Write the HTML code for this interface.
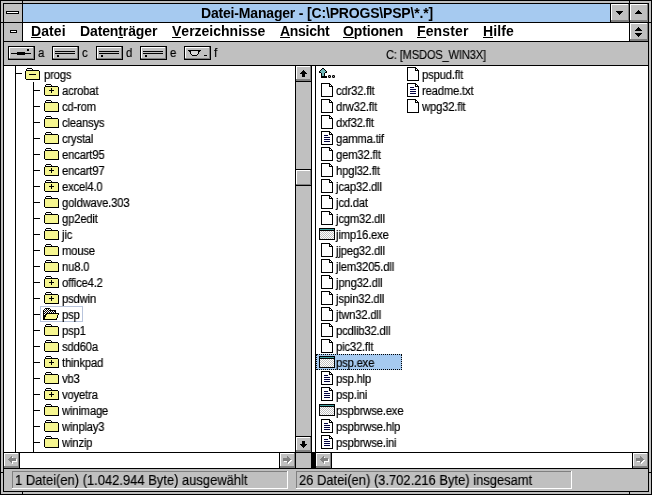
<!DOCTYPE html><html><head><meta charset="utf-8"><style>
*{margin:0;padding:0}
html,body{width:652px;height:495px;overflow:hidden;background:#c0c0c0}
body{position:relative}
div,span,svg{position:absolute}
span{white-space:pre;color:#000;will-change:transform;-webkit-text-stroke:0.25px #000}
.tb{font:bold 14px/14px "Liberation Sans",sans-serif;top:6px;letter-spacing:-0.18px;-webkit-text-stroke:0}
.mb{font:bold 14px/14px "Liberation Sans",sans-serif;top:24px;letter-spacing:-0.3px;-webkit-text-stroke:0}
.mb u{text-decoration:none;position:relative}.mb u::after{content:"";position:absolute;left:0;right:0;top:14px;height:1px;background:#000}
.dl{font:12px/12px "Liberation Sans",sans-serif;top:47px;transform:scaleX(0.94);transform-origin:0 0;-webkit-text-stroke:0.2px #000}
.dv{font:12px/12px "Liberation Sans",sans-serif;top:49px;letter-spacing:-0.2px;transform:scaleX(0.93);transform-origin:0 0;-webkit-text-stroke:0.15px #000}
.st{font:14px/14px "Liberation Sans",sans-serif;top:473px;transform:scaleX(0.925);transform-origin:0 0;-webkit-text-stroke:0.15px #000}
.ft{font:12px/12px "Liberation Sans",sans-serif;letter-spacing:-0.2px;transform:scaleX(0.94);transform-origin:0 0;-webkit-text-stroke:0.2px #000}
</style></head><body><div style="left:0px;top:0px;width:652px;height:495px;background:#000;"></div>
<div style="left:1px;top:1px;width:650px;height:493px;background:#c0c0c0;"></div>
<div style="left:3px;top:3px;width:646px;height:489px;background:#000;"></div>
<div style="left:22px;top:0px;width:1px;height:4px;background:#000;"></div>
<div style="left:22px;top:491px;width:1px;height:4px;background:#000;"></div>
<div style="left:629px;top:0px;width:1px;height:4px;background:#000;"></div>
<div style="left:629px;top:491px;width:1px;height:4px;background:#000;"></div>
<div style="left:0px;top:22px;width:4px;height:1px;background:#000;"></div>
<div style="left:648px;top:22px;width:4px;height:1px;background:#000;"></div>
<div style="left:0px;top:472px;width:4px;height:1px;background:#000;"></div>
<div style="left:648px;top:472px;width:4px;height:1px;background:#000;"></div>
<div style="left:4px;top:4px;width:18px;height:18px;background:#c0c0c0;"></div>
<div style="left:6px;top:11px;width:13px;height:3px;background:#000;"></div>
<div style="left:7px;top:12px;width:11px;height:1px;background:#fff;"></div>
<div style="left:23px;top:4px;width:587px;height:18px;background:#a6caf0;"></div>
<div style="left:611px;top:4px;width:18px;height:18px;background:#808080;"></div>
<div style="left:611px;top:4px;width:17px;height:16px;background:#fff;"></div>
<div style="left:612px;top:5px;width:16px;height:15px;background:#c0c0c0;"></div>
<div style="left:630px;top:4px;width:18px;height:18px;background:#808080;"></div>
<div style="left:630px;top:4px;width:17px;height:16px;background:#fff;"></div>
<div style="left:631px;top:5px;width:16px;height:15px;background:#c0c0c0;"></div>
<div style="left:616px;top:11px;width:7px;height:1px;background:#000;"></div>
<div style="left:617px;top:12px;width:5px;height:1px;background:#000;"></div>
<div style="left:618px;top:13px;width:3px;height:1px;background:#000;"></div>
<div style="left:619px;top:14px;width:1px;height:1px;background:#000;"></div>
<div style="left:638px;top:10px;width:1px;height:1px;background:#000;"></div>
<div style="left:637px;top:11px;width:3px;height:1px;background:#000;"></div>
<div style="left:636px;top:12px;width:5px;height:1px;background:#000;"></div>
<div style="left:635px;top:13px;width:7px;height:1px;background:#000;"></div>
<span class="tb" style="left:201px;">Datei-Manager - [C:\PROGS\PSP\*.*]</span>
<div style="left:4px;top:23px;width:18px;height:18px;background:#c0c0c0;"></div>
<div style="left:10px;top:30px;width:7px;height:3px;background:#000;"></div>
<div style="left:11px;top:31px;width:5px;height:1px;background:#fff;"></div>
<div style="left:23px;top:23px;width:606px;height:18px;background:#fff;"></div>
<div style="left:630px;top:23px;width:18px;height:18px;background:#808080;"></div>
<div style="left:630px;top:23px;width:17px;height:16px;background:#fff;"></div>
<div style="left:631px;top:24px;width:16px;height:15px;background:#c0c0c0;"></div>
<div style="left:638px;top:27px;width:1px;height:1px;background:#000;"></div>
<div style="left:637px;top:28px;width:3px;height:1px;background:#000;"></div>
<div style="left:636px;top:29px;width:5px;height:1px;background:#000;"></div>
<div style="left:635px;top:30px;width:7px;height:1px;background:#000;"></div>
<div style="left:635px;top:33px;width:7px;height:1px;background:#000;"></div>
<div style="left:636px;top:34px;width:5px;height:1px;background:#000;"></div>
<div style="left:637px;top:35px;width:3px;height:1px;background:#000;"></div>
<div style="left:638px;top:36px;width:1px;height:1px;background:#000;"></div>
<span class="mb" style="left:31px;letter-spacing:0.1px"><u>D</u>atei</span>
<span class="mb" style="left:80px;letter-spacing:-0.12px">Daten<u>t</u>räger</span>
<span class="mb" style="left:172px;letter-spacing:0.0px"><u>V</u>erzeichnisse</span>
<span class="mb" style="left:280px;letter-spacing:-0.3px"><u>A</u>nsicht</span>
<span class="mb" style="left:343px;letter-spacing:-0.15px"><u>O</u>ptionen</span>
<span class="mb" style="left:417px;letter-spacing:0.13px"><u>F</u>enster</span>
<span class="mb" style="left:483px;letter-spacing:0.1px"><u>H</u>ilfe</span>
<div style="left:4px;top:42px;width:644px;height:23px;background:#c0c0c0;"></div>
<div style="left:8px;top:46px;width:27px;height:14px;background:#000;"></div>
<div style="left:9px;top:47px;width:25px;height:12px;background:#808080;"></div>
<div style="left:9px;top:47px;width:24px;height:11px;background:#fff;"></div>
<div style="left:10px;top:48px;width:23px;height:10px;background:#c0c0c0;"></div>
<span class="dl" style="left:38px;">a</span>
<div style="left:52px;top:46px;width:27px;height:14px;background:#000;"></div>
<div style="left:53px;top:47px;width:25px;height:12px;background:#808080;"></div>
<div style="left:53px;top:47px;width:24px;height:11px;background:#fff;"></div>
<div style="left:54px;top:48px;width:23px;height:10px;background:#c0c0c0;"></div>
<span class="dl" style="left:82px;">c</span>
<div style="left:96px;top:46px;width:27px;height:14px;background:#000;"></div>
<div style="left:97px;top:47px;width:25px;height:12px;background:#808080;"></div>
<div style="left:97px;top:47px;width:24px;height:11px;background:#fff;"></div>
<div style="left:98px;top:48px;width:23px;height:10px;background:#c0c0c0;"></div>
<span class="dl" style="left:126px;">d</span>
<div style="left:140px;top:46px;width:27px;height:14px;background:#000;"></div>
<div style="left:141px;top:47px;width:25px;height:12px;background:#808080;"></div>
<div style="left:141px;top:47px;width:24px;height:11px;background:#fff;"></div>
<div style="left:142px;top:48px;width:23px;height:10px;background:#c0c0c0;"></div>
<span class="dl" style="left:170px;">e</span>
<div style="left:184px;top:46px;width:27px;height:14px;background:#000;"></div>
<div style="left:185px;top:47px;width:25px;height:12px;background:#808080;"></div>
<div style="left:185px;top:47px;width:24px;height:11px;background:#fff;"></div>
<div style="left:186px;top:48px;width:23px;height:10px;background:#c0c0c0;"></div>
<span class="dl" style="left:214px;">f</span>
<div style="left:11px;top:53px;width:20px;height:1px;background:#000;"></div>
<div style="left:17px;top:52px;width:8px;height:3px;background:#000;"></div>
<div style="left:27px;top:49px;width:2px;height:2px;background:#000;"></div>
<div style="left:55px;top:51px;width:20px;height:1px;background:#000;"></div>
<div style="left:55px;top:53px;width:20px;height:1px;background:#000;"></div>
<div style="left:57px;top:55px;width:2px;height:2px;background:#000;"></div>
<div style="left:99px;top:51px;width:20px;height:1px;background:#000;"></div>
<div style="left:99px;top:53px;width:20px;height:1px;background:#000;"></div>
<div style="left:101px;top:55px;width:2px;height:2px;background:#000;"></div>
<div style="left:143px;top:51px;width:20px;height:1px;background:#000;"></div>
<div style="left:143px;top:53px;width:20px;height:1px;background:#000;"></div>
<div style="left:145px;top:55px;width:2px;height:2px;background:#000;"></div>
<div style="left:188px;top:50px;width:13px;height:1px;background:#000;"></div>
<div style="left:189px;top:51px;width:2px;height:1px;background:#000;"></div>
<div style="left:191px;top:51px;width:7px;height:1px;background:#d8d8d8;"></div>
<div style="left:198px;top:51px;width:2px;height:1px;background:#000;"></div>
<div style="left:190px;top:52px;width:1px;height:2px;background:#000;"></div>
<div style="left:191px;top:52px;width:7px;height:2px;background:#d8d8d8;"></div>
<div style="left:198px;top:52px;width:1px;height:2px;background:#000;"></div>
<div style="left:191px;top:54px;width:1px;height:1px;background:#000;"></div>
<div style="left:192px;top:54px;width:5px;height:1px;background:#d8d8d8;"></div>
<div style="left:197px;top:54px;width:1px;height:1px;background:#000;"></div>
<div style="left:192px;top:55px;width:5px;height:1px;background:#000;"></div>
<div style="left:204px;top:55px;width:3px;height:1px;background:#000;"></div>
<span class="dv" style="left:386px;">C: [MSDOS_WIN3X]</span>
<div style="left:4px;top:65px;width:644px;height:1px;background:#000;"></div>
<div style="left:4px;top:66px;width:291px;height:386px;background:#fff;"></div>
<div style="left:295px;top:66px;width:1px;height:386px;background:#000;"></div>
<div style="left:296px;top:66px;width:15px;height:386px;background:#c0c0c0;"></div>
<div style="left:311px;top:66px;width:1px;height:386px;background:#000;"></div>
<div style="left:312px;top:66px;width:3px;height:386px;background:#fff;"></div>
<div style="left:315px;top:66px;width:1px;height:386px;background:#000;"></div>
<div style="left:316px;top:66px;width:332px;height:386px;background:#fff;"></div>
<div style="left:4px;top:452px;width:644px;height:1px;background:#000;"></div>
<div style="left:4px;top:453px;width:644px;height:15px;background:#fff;"></div>
<div style="left:311px;top:453px;width:5px;height:15px;background:#000;"></div>
<div style="left:296px;top:453px;width:15px;height:15px;background:#c0c0c0;"></div>
<div style="left:295px;top:453px;width:1px;height:15px;background:#000;"></div>
<div style="left:4px;top:468px;width:644px;height:1px;background:#000;"></div>
<div style="left:296px;top:66px;width:15px;height:15px;background:#808080;"></div>
<div style="left:296px;top:66px;width:14px;height:13px;background:#fff;"></div>
<div style="left:297px;top:67px;width:13px;height:12px;background:#c0c0c0;"></div>
<div style="left:296px;top:81px;width:15px;height:1px;background:#000;"></div>
<div style="left:296px;top:436px;width:15px;height:1px;background:#000;"></div>
<div style="left:296px;top:437px;width:15px;height:15px;background:#808080;"></div>
<div style="left:296px;top:437px;width:14px;height:13px;background:#fff;"></div>
<div style="left:297px;top:438px;width:13px;height:12px;background:#c0c0c0;"></div>
<div style="left:303px;top:70px;width:1px;height:1px;background:#000;"></div>
<div style="left:302px;top:71px;width:3px;height:1px;background:#000;"></div>
<div style="left:301px;top:72px;width:5px;height:1px;background:#000;"></div>
<div style="left:300px;top:73px;width:7px;height:1px;background:#000;"></div>
<div style="left:302px;top:74px;width:3px;height:3px;background:#000;"></div>
<div style="left:302px;top:441px;width:3px;height:3px;background:#000;"></div>
<div style="left:300px;top:444px;width:7px;height:1px;background:#000;"></div>
<div style="left:301px;top:445px;width:5px;height:1px;background:#000;"></div>
<div style="left:302px;top:446px;width:3px;height:1px;background:#000;"></div>
<div style="left:303px;top:447px;width:1px;height:1px;background:#000;"></div>
<div style="left:296px;top:169px;width:15px;height:1px;background:#000;"></div>
<div style="left:296px;top:185px;width:15px;height:1px;background:#000;"></div>
<div style="left:296px;top:170px;width:15px;height:15px;background:#808080;"></div>
<div style="left:296px;top:170px;width:14px;height:14px;background:#fff;"></div>
<div style="left:297px;top:171px;width:13px;height:13px;background:#c0c0c0;"></div>
<div style="left:4px;top:453px;width:15px;height:15px;background:#808080;"></div>
<div style="left:4px;top:453px;width:14px;height:13px;background:#fff;"></div>
<div style="left:5px;top:454px;width:13px;height:12px;background:#c0c0c0;"></div>
<div style="left:13px;top:459px;width:4px;height:3px;background:#fff;"></div>
<div style="left:12px;top:457px;width:1px;height:7px;background:#fff;"></div>
<div style="left:11px;top:458px;width:1px;height:5px;background:#fff;"></div>
<div style="left:10px;top:459px;width:1px;height:3px;background:#fff;"></div>
<div style="left:9px;top:460px;width:1px;height:1px;background:#fff;"></div>
<div style="left:12px;top:458px;width:4px;height:3px;background:#808080;"></div>
<div style="left:11px;top:456px;width:1px;height:7px;background:#808080;"></div>
<div style="left:10px;top:457px;width:1px;height:5px;background:#808080;"></div>
<div style="left:9px;top:458px;width:1px;height:3px;background:#808080;"></div>
<div style="left:8px;top:459px;width:1px;height:1px;background:#808080;"></div>
<div style="left:19px;top:453px;width:1px;height:15px;background:#000;"></div>
<div style="left:279px;top:453px;width:1px;height:15px;background:#000;"></div>
<div style="left:280px;top:453px;width:15px;height:15px;background:#808080;"></div>
<div style="left:280px;top:453px;width:14px;height:13px;background:#fff;"></div>
<div style="left:281px;top:454px;width:13px;height:12px;background:#c0c0c0;"></div>
<div style="left:284px;top:459px;width:4px;height:3px;background:#fff;"></div>
<div style="left:288px;top:457px;width:1px;height:7px;background:#fff;"></div>
<div style="left:289px;top:458px;width:1px;height:5px;background:#fff;"></div>
<div style="left:290px;top:459px;width:1px;height:3px;background:#fff;"></div>
<div style="left:291px;top:460px;width:1px;height:1px;background:#fff;"></div>
<div style="left:283px;top:458px;width:4px;height:3px;background:#808080;"></div>
<div style="left:287px;top:456px;width:1px;height:7px;background:#808080;"></div>
<div style="left:288px;top:457px;width:1px;height:5px;background:#808080;"></div>
<div style="left:289px;top:458px;width:1px;height:3px;background:#808080;"></div>
<div style="left:290px;top:459px;width:1px;height:1px;background:#808080;"></div>
<div style="left:316px;top:453px;width:15px;height:15px;background:#808080;"></div>
<div style="left:316px;top:453px;width:14px;height:13px;background:#fff;"></div>
<div style="left:317px;top:454px;width:13px;height:12px;background:#c0c0c0;"></div>
<div style="left:325px;top:459px;width:4px;height:3px;background:#fff;"></div>
<div style="left:324px;top:457px;width:1px;height:7px;background:#fff;"></div>
<div style="left:323px;top:458px;width:1px;height:5px;background:#fff;"></div>
<div style="left:322px;top:459px;width:1px;height:3px;background:#fff;"></div>
<div style="left:321px;top:460px;width:1px;height:1px;background:#fff;"></div>
<div style="left:324px;top:458px;width:4px;height:3px;background:#808080;"></div>
<div style="left:323px;top:456px;width:1px;height:7px;background:#808080;"></div>
<div style="left:322px;top:457px;width:1px;height:5px;background:#808080;"></div>
<div style="left:321px;top:458px;width:1px;height:3px;background:#808080;"></div>
<div style="left:320px;top:459px;width:1px;height:1px;background:#808080;"></div>
<div style="left:331px;top:453px;width:1px;height:15px;background:#000;"></div>
<div style="left:632px;top:453px;width:1px;height:15px;background:#000;"></div>
<div style="left:633px;top:453px;width:15px;height:15px;background:#808080;"></div>
<div style="left:633px;top:453px;width:14px;height:13px;background:#fff;"></div>
<div style="left:634px;top:454px;width:13px;height:12px;background:#c0c0c0;"></div>
<div style="left:637px;top:459px;width:4px;height:3px;background:#fff;"></div>
<div style="left:641px;top:457px;width:1px;height:7px;background:#fff;"></div>
<div style="left:642px;top:458px;width:1px;height:5px;background:#fff;"></div>
<div style="left:643px;top:459px;width:1px;height:3px;background:#fff;"></div>
<div style="left:644px;top:460px;width:1px;height:1px;background:#fff;"></div>
<div style="left:636px;top:458px;width:4px;height:3px;background:#808080;"></div>
<div style="left:640px;top:456px;width:1px;height:7px;background:#808080;"></div>
<div style="left:641px;top:457px;width:1px;height:5px;background:#808080;"></div>
<div style="left:642px;top:458px;width:1px;height:3px;background:#808080;"></div>
<div style="left:643px;top:459px;width:1px;height:1px;background:#808080;"></div>
<div style="left:4px;top:469px;width:644px;height:22px;background:#c0c0c0;"></div>
<div style="left:12px;top:471px;width:276px;height:18px;background:#fff;"></div>
<div style="left:12px;top:471px;width:275px;height:17px;background:#808080;"></div>
<div style="left:13px;top:472px;width:274px;height:16px;background:#c0c0c0;"></div>
<div style="left:296px;top:471px;width:276px;height:18px;background:#fff;"></div>
<div style="left:296px;top:471px;width:275px;height:17px;background:#808080;"></div>
<div style="left:297px;top:472px;width:274px;height:16px;background:#c0c0c0;"></div>
<span class="st" style="left:15px;">1 Datei(en) (1.042.944 Byte) ausgewählt</span>
<span class="st" style="left:299px;">26 Datei(en) (3.702.216 Byte) insgesamt</span>
<div style="left:15px;top:66px;width:1px;height:386px;background:#000;"></div>
<div style="left:16px;top:73px;width:6px;height:1px;background:#000;"></div>
<div style="left:27px;top:68px;width:5px;height:1px;background:#000;"></div>
<div style="left:26px;top:69px;width:1px;height:1px;background:#000;"></div>
<div style="left:32px;top:69px;width:1px;height:1px;background:#000;"></div>
<div style="left:27px;top:69px;width:5px;height:1px;background:#fff;"></div>
<div style="left:26px;top:70px;width:13px;height:1px;background:#000;"></div>
<div style="left:25px;top:71px;width:1px;height:8px;background:#000;"></div>
<div style="left:39px;top:71px;width:1px;height:9px;background:#000;"></div>
<div style="left:26px;top:79px;width:14px;height:1px;background:#000;"></div>
<div style="left:26px;top:71px;width:13px;height:8px;background:#f6f690;"></div>
<div style="left:29px;top:74px;width:7px;height:1px;background:#000;"></div>
<div style="left:33px;top:82px;width:1px;height:370px;background:#000;"></div>
<div style="left:34px;top:90px;width:6px;height:1px;background:#000;"></div>
<div style="left:46px;top:84px;width:5px;height:1px;background:#000;"></div>
<div style="left:45px;top:85px;width:1px;height:1px;background:#000;"></div>
<div style="left:51px;top:85px;width:1px;height:1px;background:#000;"></div>
<div style="left:46px;top:85px;width:5px;height:1px;background:#fff;"></div>
<div style="left:45px;top:86px;width:13px;height:1px;background:#000;"></div>
<div style="left:44px;top:87px;width:1px;height:8px;background:#000;"></div>
<div style="left:58px;top:87px;width:1px;height:9px;background:#000;"></div>
<div style="left:45px;top:95px;width:14px;height:1px;background:#000;"></div>
<div style="left:45px;top:87px;width:13px;height:8px;background:#f6f690;"></div>
<div style="left:49px;top:90px;width:5px;height:1px;background:#000;"></div>
<div style="left:51px;top:88px;width:1px;height:5px;background:#000;"></div>
<div style="left:34px;top:106px;width:6px;height:1px;background:#000;"></div>
<div style="left:46px;top:100px;width:5px;height:1px;background:#000;"></div>
<div style="left:45px;top:101px;width:1px;height:1px;background:#000;"></div>
<div style="left:51px;top:101px;width:1px;height:1px;background:#000;"></div>
<div style="left:46px;top:101px;width:5px;height:1px;background:#fff;"></div>
<div style="left:45px;top:102px;width:13px;height:1px;background:#000;"></div>
<div style="left:44px;top:103px;width:1px;height:8px;background:#000;"></div>
<div style="left:58px;top:103px;width:1px;height:9px;background:#000;"></div>
<div style="left:45px;top:111px;width:14px;height:1px;background:#000;"></div>
<div style="left:45px;top:103px;width:13px;height:8px;background:#f6f690;"></div>
<div style="left:34px;top:122px;width:6px;height:1px;background:#000;"></div>
<div style="left:46px;top:116px;width:5px;height:1px;background:#000;"></div>
<div style="left:45px;top:117px;width:1px;height:1px;background:#000;"></div>
<div style="left:51px;top:117px;width:1px;height:1px;background:#000;"></div>
<div style="left:46px;top:117px;width:5px;height:1px;background:#fff;"></div>
<div style="left:45px;top:118px;width:13px;height:1px;background:#000;"></div>
<div style="left:44px;top:119px;width:1px;height:8px;background:#000;"></div>
<div style="left:58px;top:119px;width:1px;height:9px;background:#000;"></div>
<div style="left:45px;top:127px;width:14px;height:1px;background:#000;"></div>
<div style="left:45px;top:119px;width:13px;height:8px;background:#f6f690;"></div>
<div style="left:34px;top:138px;width:6px;height:1px;background:#000;"></div>
<div style="left:46px;top:132px;width:5px;height:1px;background:#000;"></div>
<div style="left:45px;top:133px;width:1px;height:1px;background:#000;"></div>
<div style="left:51px;top:133px;width:1px;height:1px;background:#000;"></div>
<div style="left:46px;top:133px;width:5px;height:1px;background:#fff;"></div>
<div style="left:45px;top:134px;width:13px;height:1px;background:#000;"></div>
<div style="left:44px;top:135px;width:1px;height:8px;background:#000;"></div>
<div style="left:58px;top:135px;width:1px;height:9px;background:#000;"></div>
<div style="left:45px;top:143px;width:14px;height:1px;background:#000;"></div>
<div style="left:45px;top:135px;width:13px;height:8px;background:#f6f690;"></div>
<div style="left:34px;top:154px;width:6px;height:1px;background:#000;"></div>
<div style="left:46px;top:148px;width:5px;height:1px;background:#000;"></div>
<div style="left:45px;top:149px;width:1px;height:1px;background:#000;"></div>
<div style="left:51px;top:149px;width:1px;height:1px;background:#000;"></div>
<div style="left:46px;top:149px;width:5px;height:1px;background:#fff;"></div>
<div style="left:45px;top:150px;width:13px;height:1px;background:#000;"></div>
<div style="left:44px;top:151px;width:1px;height:8px;background:#000;"></div>
<div style="left:58px;top:151px;width:1px;height:9px;background:#000;"></div>
<div style="left:45px;top:159px;width:14px;height:1px;background:#000;"></div>
<div style="left:45px;top:151px;width:13px;height:8px;background:#f6f690;"></div>
<div style="left:34px;top:170px;width:6px;height:1px;background:#000;"></div>
<div style="left:46px;top:164px;width:5px;height:1px;background:#000;"></div>
<div style="left:45px;top:165px;width:1px;height:1px;background:#000;"></div>
<div style="left:51px;top:165px;width:1px;height:1px;background:#000;"></div>
<div style="left:46px;top:165px;width:5px;height:1px;background:#fff;"></div>
<div style="left:45px;top:166px;width:13px;height:1px;background:#000;"></div>
<div style="left:44px;top:167px;width:1px;height:8px;background:#000;"></div>
<div style="left:58px;top:167px;width:1px;height:9px;background:#000;"></div>
<div style="left:45px;top:175px;width:14px;height:1px;background:#000;"></div>
<div style="left:45px;top:167px;width:13px;height:8px;background:#f6f690;"></div>
<div style="left:49px;top:170px;width:5px;height:1px;background:#000;"></div>
<div style="left:51px;top:168px;width:1px;height:5px;background:#000;"></div>
<div style="left:34px;top:186px;width:6px;height:1px;background:#000;"></div>
<div style="left:46px;top:180px;width:5px;height:1px;background:#000;"></div>
<div style="left:45px;top:181px;width:1px;height:1px;background:#000;"></div>
<div style="left:51px;top:181px;width:1px;height:1px;background:#000;"></div>
<div style="left:46px;top:181px;width:5px;height:1px;background:#fff;"></div>
<div style="left:45px;top:182px;width:13px;height:1px;background:#000;"></div>
<div style="left:44px;top:183px;width:1px;height:8px;background:#000;"></div>
<div style="left:58px;top:183px;width:1px;height:9px;background:#000;"></div>
<div style="left:45px;top:191px;width:14px;height:1px;background:#000;"></div>
<div style="left:45px;top:183px;width:13px;height:8px;background:#f6f690;"></div>
<div style="left:49px;top:186px;width:5px;height:1px;background:#000;"></div>
<div style="left:51px;top:184px;width:1px;height:5px;background:#000;"></div>
<div style="left:34px;top:202px;width:6px;height:1px;background:#000;"></div>
<div style="left:46px;top:196px;width:5px;height:1px;background:#000;"></div>
<div style="left:45px;top:197px;width:1px;height:1px;background:#000;"></div>
<div style="left:51px;top:197px;width:1px;height:1px;background:#000;"></div>
<div style="left:46px;top:197px;width:5px;height:1px;background:#fff;"></div>
<div style="left:45px;top:198px;width:13px;height:1px;background:#000;"></div>
<div style="left:44px;top:199px;width:1px;height:8px;background:#000;"></div>
<div style="left:58px;top:199px;width:1px;height:9px;background:#000;"></div>
<div style="left:45px;top:207px;width:14px;height:1px;background:#000;"></div>
<div style="left:45px;top:199px;width:13px;height:8px;background:#f6f690;"></div>
<div style="left:34px;top:218px;width:6px;height:1px;background:#000;"></div>
<div style="left:46px;top:212px;width:5px;height:1px;background:#000;"></div>
<div style="left:45px;top:213px;width:1px;height:1px;background:#000;"></div>
<div style="left:51px;top:213px;width:1px;height:1px;background:#000;"></div>
<div style="left:46px;top:213px;width:5px;height:1px;background:#fff;"></div>
<div style="left:45px;top:214px;width:13px;height:1px;background:#000;"></div>
<div style="left:44px;top:215px;width:1px;height:8px;background:#000;"></div>
<div style="left:58px;top:215px;width:1px;height:9px;background:#000;"></div>
<div style="left:45px;top:223px;width:14px;height:1px;background:#000;"></div>
<div style="left:45px;top:215px;width:13px;height:8px;background:#f6f690;"></div>
<div style="left:34px;top:234px;width:6px;height:1px;background:#000;"></div>
<div style="left:46px;top:228px;width:5px;height:1px;background:#000;"></div>
<div style="left:45px;top:229px;width:1px;height:1px;background:#000;"></div>
<div style="left:51px;top:229px;width:1px;height:1px;background:#000;"></div>
<div style="left:46px;top:229px;width:5px;height:1px;background:#fff;"></div>
<div style="left:45px;top:230px;width:13px;height:1px;background:#000;"></div>
<div style="left:44px;top:231px;width:1px;height:8px;background:#000;"></div>
<div style="left:58px;top:231px;width:1px;height:9px;background:#000;"></div>
<div style="left:45px;top:239px;width:14px;height:1px;background:#000;"></div>
<div style="left:45px;top:231px;width:13px;height:8px;background:#f6f690;"></div>
<div style="left:34px;top:250px;width:6px;height:1px;background:#000;"></div>
<div style="left:46px;top:244px;width:5px;height:1px;background:#000;"></div>
<div style="left:45px;top:245px;width:1px;height:1px;background:#000;"></div>
<div style="left:51px;top:245px;width:1px;height:1px;background:#000;"></div>
<div style="left:46px;top:245px;width:5px;height:1px;background:#fff;"></div>
<div style="left:45px;top:246px;width:13px;height:1px;background:#000;"></div>
<div style="left:44px;top:247px;width:1px;height:8px;background:#000;"></div>
<div style="left:58px;top:247px;width:1px;height:9px;background:#000;"></div>
<div style="left:45px;top:255px;width:14px;height:1px;background:#000;"></div>
<div style="left:45px;top:247px;width:13px;height:8px;background:#f6f690;"></div>
<div style="left:34px;top:266px;width:6px;height:1px;background:#000;"></div>
<div style="left:46px;top:260px;width:5px;height:1px;background:#000;"></div>
<div style="left:45px;top:261px;width:1px;height:1px;background:#000;"></div>
<div style="left:51px;top:261px;width:1px;height:1px;background:#000;"></div>
<div style="left:46px;top:261px;width:5px;height:1px;background:#fff;"></div>
<div style="left:45px;top:262px;width:13px;height:1px;background:#000;"></div>
<div style="left:44px;top:263px;width:1px;height:8px;background:#000;"></div>
<div style="left:58px;top:263px;width:1px;height:9px;background:#000;"></div>
<div style="left:45px;top:271px;width:14px;height:1px;background:#000;"></div>
<div style="left:45px;top:263px;width:13px;height:8px;background:#f6f690;"></div>
<div style="left:34px;top:282px;width:6px;height:1px;background:#000;"></div>
<div style="left:46px;top:276px;width:5px;height:1px;background:#000;"></div>
<div style="left:45px;top:277px;width:1px;height:1px;background:#000;"></div>
<div style="left:51px;top:277px;width:1px;height:1px;background:#000;"></div>
<div style="left:46px;top:277px;width:5px;height:1px;background:#fff;"></div>
<div style="left:45px;top:278px;width:13px;height:1px;background:#000;"></div>
<div style="left:44px;top:279px;width:1px;height:8px;background:#000;"></div>
<div style="left:58px;top:279px;width:1px;height:9px;background:#000;"></div>
<div style="left:45px;top:287px;width:14px;height:1px;background:#000;"></div>
<div style="left:45px;top:279px;width:13px;height:8px;background:#f6f690;"></div>
<div style="left:49px;top:282px;width:5px;height:1px;background:#000;"></div>
<div style="left:51px;top:280px;width:1px;height:5px;background:#000;"></div>
<div style="left:34px;top:298px;width:6px;height:1px;background:#000;"></div>
<div style="left:46px;top:292px;width:5px;height:1px;background:#000;"></div>
<div style="left:45px;top:293px;width:1px;height:1px;background:#000;"></div>
<div style="left:51px;top:293px;width:1px;height:1px;background:#000;"></div>
<div style="left:46px;top:293px;width:5px;height:1px;background:#fff;"></div>
<div style="left:45px;top:294px;width:13px;height:1px;background:#000;"></div>
<div style="left:44px;top:295px;width:1px;height:8px;background:#000;"></div>
<div style="left:58px;top:295px;width:1px;height:9px;background:#000;"></div>
<div style="left:45px;top:303px;width:14px;height:1px;background:#000;"></div>
<div style="left:45px;top:295px;width:13px;height:8px;background:#f6f690;"></div>
<div style="left:49px;top:298px;width:5px;height:1px;background:#000;"></div>
<div style="left:51px;top:296px;width:1px;height:5px;background:#000;"></div>
<div style="left:34px;top:314px;width:6px;height:1px;background:#000;"></div>
<div style="left:40px;top:306px;width:43px;height:16px;background:#b8c4dc;"></div>
<div style="left:41px;top:307px;width:41px;height:14px;background:#fff;"></div>
<svg style="position:absolute;left:43px;top:308px" width="17" height="13" shape-rendering="crispEdges"><defs><pattern id="ck" width="2" height="2" patternUnits="userSpaceOnUse"><rect width="2" height="2" fill="#fff"/><rect width="1" height="1" fill="#000"/><rect x="1" y="1" width="1" height="1" fill="#000"/></pattern></defs><path d="M0.5 11.5 V2.5 L2.5 0.5 H6.5 L7.5 1.5 V2.5 H12.5 V5.5" fill="url(#ck)" stroke="#000"/><path d="M3.5 5.5 H15.5 L13.5 11.5 H0.5 Z" fill="#f6f690" stroke="#000"/></svg>
<div style="left:34px;top:330px;width:6px;height:1px;background:#000;"></div>
<div style="left:46px;top:324px;width:5px;height:1px;background:#000;"></div>
<div style="left:45px;top:325px;width:1px;height:1px;background:#000;"></div>
<div style="left:51px;top:325px;width:1px;height:1px;background:#000;"></div>
<div style="left:46px;top:325px;width:5px;height:1px;background:#fff;"></div>
<div style="left:45px;top:326px;width:13px;height:1px;background:#000;"></div>
<div style="left:44px;top:327px;width:1px;height:8px;background:#000;"></div>
<div style="left:58px;top:327px;width:1px;height:9px;background:#000;"></div>
<div style="left:45px;top:335px;width:14px;height:1px;background:#000;"></div>
<div style="left:45px;top:327px;width:13px;height:8px;background:#f6f690;"></div>
<div style="left:34px;top:346px;width:6px;height:1px;background:#000;"></div>
<div style="left:46px;top:340px;width:5px;height:1px;background:#000;"></div>
<div style="left:45px;top:341px;width:1px;height:1px;background:#000;"></div>
<div style="left:51px;top:341px;width:1px;height:1px;background:#000;"></div>
<div style="left:46px;top:341px;width:5px;height:1px;background:#fff;"></div>
<div style="left:45px;top:342px;width:13px;height:1px;background:#000;"></div>
<div style="left:44px;top:343px;width:1px;height:8px;background:#000;"></div>
<div style="left:58px;top:343px;width:1px;height:9px;background:#000;"></div>
<div style="left:45px;top:351px;width:14px;height:1px;background:#000;"></div>
<div style="left:45px;top:343px;width:13px;height:8px;background:#f6f690;"></div>
<div style="left:34px;top:362px;width:6px;height:1px;background:#000;"></div>
<div style="left:46px;top:356px;width:5px;height:1px;background:#000;"></div>
<div style="left:45px;top:357px;width:1px;height:1px;background:#000;"></div>
<div style="left:51px;top:357px;width:1px;height:1px;background:#000;"></div>
<div style="left:46px;top:357px;width:5px;height:1px;background:#fff;"></div>
<div style="left:45px;top:358px;width:13px;height:1px;background:#000;"></div>
<div style="left:44px;top:359px;width:1px;height:8px;background:#000;"></div>
<div style="left:58px;top:359px;width:1px;height:9px;background:#000;"></div>
<div style="left:45px;top:367px;width:14px;height:1px;background:#000;"></div>
<div style="left:45px;top:359px;width:13px;height:8px;background:#f6f690;"></div>
<div style="left:49px;top:362px;width:5px;height:1px;background:#000;"></div>
<div style="left:51px;top:360px;width:1px;height:5px;background:#000;"></div>
<div style="left:34px;top:378px;width:6px;height:1px;background:#000;"></div>
<div style="left:46px;top:372px;width:5px;height:1px;background:#000;"></div>
<div style="left:45px;top:373px;width:1px;height:1px;background:#000;"></div>
<div style="left:51px;top:373px;width:1px;height:1px;background:#000;"></div>
<div style="left:46px;top:373px;width:5px;height:1px;background:#fff;"></div>
<div style="left:45px;top:374px;width:13px;height:1px;background:#000;"></div>
<div style="left:44px;top:375px;width:1px;height:8px;background:#000;"></div>
<div style="left:58px;top:375px;width:1px;height:9px;background:#000;"></div>
<div style="left:45px;top:383px;width:14px;height:1px;background:#000;"></div>
<div style="left:45px;top:375px;width:13px;height:8px;background:#f6f690;"></div>
<div style="left:34px;top:394px;width:6px;height:1px;background:#000;"></div>
<div style="left:46px;top:388px;width:5px;height:1px;background:#000;"></div>
<div style="left:45px;top:389px;width:1px;height:1px;background:#000;"></div>
<div style="left:51px;top:389px;width:1px;height:1px;background:#000;"></div>
<div style="left:46px;top:389px;width:5px;height:1px;background:#fff;"></div>
<div style="left:45px;top:390px;width:13px;height:1px;background:#000;"></div>
<div style="left:44px;top:391px;width:1px;height:8px;background:#000;"></div>
<div style="left:58px;top:391px;width:1px;height:9px;background:#000;"></div>
<div style="left:45px;top:399px;width:14px;height:1px;background:#000;"></div>
<div style="left:45px;top:391px;width:13px;height:8px;background:#f6f690;"></div>
<div style="left:49px;top:394px;width:5px;height:1px;background:#000;"></div>
<div style="left:51px;top:392px;width:1px;height:5px;background:#000;"></div>
<div style="left:34px;top:410px;width:6px;height:1px;background:#000;"></div>
<div style="left:46px;top:404px;width:5px;height:1px;background:#000;"></div>
<div style="left:45px;top:405px;width:1px;height:1px;background:#000;"></div>
<div style="left:51px;top:405px;width:1px;height:1px;background:#000;"></div>
<div style="left:46px;top:405px;width:5px;height:1px;background:#fff;"></div>
<div style="left:45px;top:406px;width:13px;height:1px;background:#000;"></div>
<div style="left:44px;top:407px;width:1px;height:8px;background:#000;"></div>
<div style="left:58px;top:407px;width:1px;height:9px;background:#000;"></div>
<div style="left:45px;top:415px;width:14px;height:1px;background:#000;"></div>
<div style="left:45px;top:407px;width:13px;height:8px;background:#f6f690;"></div>
<div style="left:34px;top:426px;width:6px;height:1px;background:#000;"></div>
<div style="left:46px;top:420px;width:5px;height:1px;background:#000;"></div>
<div style="left:45px;top:421px;width:1px;height:1px;background:#000;"></div>
<div style="left:51px;top:421px;width:1px;height:1px;background:#000;"></div>
<div style="left:46px;top:421px;width:5px;height:1px;background:#fff;"></div>
<div style="left:45px;top:422px;width:13px;height:1px;background:#000;"></div>
<div style="left:44px;top:423px;width:1px;height:8px;background:#000;"></div>
<div style="left:58px;top:423px;width:1px;height:9px;background:#000;"></div>
<div style="left:45px;top:431px;width:14px;height:1px;background:#000;"></div>
<div style="left:45px;top:423px;width:13px;height:8px;background:#f6f690;"></div>
<div style="left:34px;top:442px;width:6px;height:1px;background:#000;"></div>
<div style="left:46px;top:436px;width:5px;height:1px;background:#000;"></div>
<div style="left:45px;top:437px;width:1px;height:1px;background:#000;"></div>
<div style="left:51px;top:437px;width:1px;height:1px;background:#000;"></div>
<div style="left:46px;top:437px;width:5px;height:1px;background:#fff;"></div>
<div style="left:45px;top:438px;width:13px;height:1px;background:#000;"></div>
<div style="left:44px;top:439px;width:1px;height:8px;background:#000;"></div>
<div style="left:58px;top:439px;width:1px;height:9px;background:#000;"></div>
<div style="left:45px;top:447px;width:14px;height:1px;background:#000;"></div>
<div style="left:45px;top:439px;width:13px;height:8px;background:#f6f690;"></div>
<div style="left:322px;top:68px;width:2px;height:1px;background:#000;"></div>
<div style="left:321px;top:69px;width:1px;height:1px;background:#000;"></div>
<div style="left:322px;top:69px;width:2px;height:1px;background:#70b8b8;"></div>
<div style="left:324px;top:69px;width:1px;height:1px;background:#000;"></div>
<div style="left:320px;top:70px;width:1px;height:1px;background:#000;"></div>
<div style="left:321px;top:70px;width:4px;height:1px;background:#70b8b8;"></div>
<div style="left:325px;top:70px;width:1px;height:1px;background:#000;"></div>
<div style="left:319px;top:71px;width:1px;height:1px;background:#000;"></div>
<div style="left:320px;top:71px;width:6px;height:1px;background:#70b8b8;"></div>
<div style="left:326px;top:71px;width:1px;height:1px;background:#000;"></div>
<div style="left:319px;top:72px;width:2px;height:1px;background:#000;"></div>
<div style="left:321px;top:72px;width:4px;height:1px;background:#70b8b8;"></div>
<div style="left:325px;top:72px;width:2px;height:1px;background:#000;"></div>
<div style="left:321px;top:73px;width:1px;height:1px;background:#000;"></div>
<div style="left:322px;top:73px;width:2px;height:1px;background:#70b8b8;"></div>
<div style="left:324px;top:73px;width:1px;height:1px;background:#000;"></div>
<div style="left:321px;top:74px;width:1px;height:1px;background:#000;"></div>
<div style="left:322px;top:74px;width:2px;height:1px;background:#70b8b8;"></div>
<div style="left:324px;top:74px;width:1px;height:1px;background:#000;"></div>
<div style="left:321px;top:75px;width:1px;height:1px;background:#000;"></div>
<div style="left:322px;top:75px;width:2px;height:1px;background:#70b8b8;"></div>
<div style="left:324px;top:75px;width:1px;height:1px;background:#000;"></div>
<div style="left:321px;top:76px;width:6px;height:1px;background:#000;"></div>
<div style="left:321px;top:77px;width:6px;height:1px;background:#000;"></div>
<div style="left:328px;top:75px;width:3px;height:3px;background:#000;"></div>
<div style="left:329px;top:76px;width:1px;height:1px;background:#a0a0a0;"></div>
<div style="left:328px;top:75px;width:1px;height:1px;background:#606060;"></div>
<div style="left:328px;top:77px;width:1px;height:1px;background:#606060;"></div>
<div style="left:330px;top:75px;width:1px;height:1px;background:#606060;"></div>
<div style="left:330px;top:77px;width:1px;height:1px;background:#606060;"></div>
<div style="left:332px;top:75px;width:3px;height:3px;background:#000;"></div>
<div style="left:333px;top:76px;width:1px;height:1px;background:#a0a0a0;"></div>
<div style="left:332px;top:75px;width:1px;height:1px;background:#606060;"></div>
<div style="left:332px;top:77px;width:1px;height:1px;background:#606060;"></div>
<div style="left:334px;top:75px;width:1px;height:1px;background:#606060;"></div>
<div style="left:334px;top:77px;width:1px;height:1px;background:#606060;"></div>
<div style="left:321px;top:83px;width:9px;height:1px;background:#000;"></div>
<div style="left:321px;top:83px;width:1px;height:14px;background:#000;"></div>
<div style="left:321px;top:96px;width:12px;height:1px;background:#000;"></div>
<div style="left:332px;top:86px;width:1px;height:11px;background:#000;"></div>
<div style="left:329px;top:83px;width:1px;height:4px;background:#000;"></div>
<div style="left:329px;top:86px;width:4px;height:1px;background:#000;"></div>
<div style="left:330px;top:84px;width:1px;height:1px;background:#000;"></div>
<div style="left:331px;top:85px;width:1px;height:1px;background:#000;"></div>
<span class="ft" style="left:336px;top:85px;">cdr32.flt</span>
<div style="left:321px;top:99px;width:9px;height:1px;background:#000;"></div>
<div style="left:321px;top:99px;width:1px;height:14px;background:#000;"></div>
<div style="left:321px;top:112px;width:12px;height:1px;background:#000;"></div>
<div style="left:332px;top:102px;width:1px;height:11px;background:#000;"></div>
<div style="left:329px;top:99px;width:1px;height:4px;background:#000;"></div>
<div style="left:329px;top:102px;width:4px;height:1px;background:#000;"></div>
<div style="left:330px;top:100px;width:1px;height:1px;background:#000;"></div>
<div style="left:331px;top:101px;width:1px;height:1px;background:#000;"></div>
<span class="ft" style="left:336px;top:101px;">drw32.flt</span>
<div style="left:321px;top:115px;width:9px;height:1px;background:#000;"></div>
<div style="left:321px;top:115px;width:1px;height:14px;background:#000;"></div>
<div style="left:321px;top:128px;width:12px;height:1px;background:#000;"></div>
<div style="left:332px;top:118px;width:1px;height:11px;background:#000;"></div>
<div style="left:329px;top:115px;width:1px;height:4px;background:#000;"></div>
<div style="left:329px;top:118px;width:4px;height:1px;background:#000;"></div>
<div style="left:330px;top:116px;width:1px;height:1px;background:#000;"></div>
<div style="left:331px;top:117px;width:1px;height:1px;background:#000;"></div>
<span class="ft" style="left:336px;top:117px;">dxf32.flt</span>
<div style="left:321px;top:131px;width:9px;height:1px;background:#000;"></div>
<div style="left:321px;top:131px;width:1px;height:14px;background:#000;"></div>
<div style="left:321px;top:144px;width:12px;height:1px;background:#000;"></div>
<div style="left:332px;top:134px;width:1px;height:11px;background:#000;"></div>
<div style="left:329px;top:131px;width:1px;height:4px;background:#000;"></div>
<div style="left:329px;top:134px;width:4px;height:1px;background:#000;"></div>
<div style="left:330px;top:132px;width:1px;height:1px;background:#000;"></div>
<div style="left:331px;top:133px;width:1px;height:1px;background:#000;"></div>
<div style="left:324px;top:135px;width:4px;height:1px;background:#000040;"></div>
<div style="left:324px;top:137px;width:6px;height:1px;background:#000040;"></div>
<div style="left:324px;top:139px;width:6px;height:1px;background:#000040;"></div>
<div style="left:324px;top:141px;width:6px;height:1px;background:#000040;"></div>
<span class="ft" style="left:336px;top:133px;">gamma.tif</span>
<div style="left:321px;top:147px;width:9px;height:1px;background:#000;"></div>
<div style="left:321px;top:147px;width:1px;height:14px;background:#000;"></div>
<div style="left:321px;top:160px;width:12px;height:1px;background:#000;"></div>
<div style="left:332px;top:150px;width:1px;height:11px;background:#000;"></div>
<div style="left:329px;top:147px;width:1px;height:4px;background:#000;"></div>
<div style="left:329px;top:150px;width:4px;height:1px;background:#000;"></div>
<div style="left:330px;top:148px;width:1px;height:1px;background:#000;"></div>
<div style="left:331px;top:149px;width:1px;height:1px;background:#000;"></div>
<span class="ft" style="left:336px;top:149px;">gem32.flt</span>
<div style="left:321px;top:163px;width:9px;height:1px;background:#000;"></div>
<div style="left:321px;top:163px;width:1px;height:14px;background:#000;"></div>
<div style="left:321px;top:176px;width:12px;height:1px;background:#000;"></div>
<div style="left:332px;top:166px;width:1px;height:11px;background:#000;"></div>
<div style="left:329px;top:163px;width:1px;height:4px;background:#000;"></div>
<div style="left:329px;top:166px;width:4px;height:1px;background:#000;"></div>
<div style="left:330px;top:164px;width:1px;height:1px;background:#000;"></div>
<div style="left:331px;top:165px;width:1px;height:1px;background:#000;"></div>
<span class="ft" style="left:336px;top:165px;">hpgl32.flt</span>
<div style="left:321px;top:179px;width:9px;height:1px;background:#000;"></div>
<div style="left:321px;top:179px;width:1px;height:14px;background:#000;"></div>
<div style="left:321px;top:192px;width:12px;height:1px;background:#000;"></div>
<div style="left:332px;top:182px;width:1px;height:11px;background:#000;"></div>
<div style="left:329px;top:179px;width:1px;height:4px;background:#000;"></div>
<div style="left:329px;top:182px;width:4px;height:1px;background:#000;"></div>
<div style="left:330px;top:180px;width:1px;height:1px;background:#000;"></div>
<div style="left:331px;top:181px;width:1px;height:1px;background:#000;"></div>
<span class="ft" style="left:336px;top:181px;">jcap32.dll</span>
<div style="left:321px;top:195px;width:9px;height:1px;background:#000;"></div>
<div style="left:321px;top:195px;width:1px;height:14px;background:#000;"></div>
<div style="left:321px;top:208px;width:12px;height:1px;background:#000;"></div>
<div style="left:332px;top:198px;width:1px;height:11px;background:#000;"></div>
<div style="left:329px;top:195px;width:1px;height:4px;background:#000;"></div>
<div style="left:329px;top:198px;width:4px;height:1px;background:#000;"></div>
<div style="left:330px;top:196px;width:1px;height:1px;background:#000;"></div>
<div style="left:331px;top:197px;width:1px;height:1px;background:#000;"></div>
<span class="ft" style="left:336px;top:197px;">jcd.dat</span>
<div style="left:321px;top:211px;width:9px;height:1px;background:#000;"></div>
<div style="left:321px;top:211px;width:1px;height:14px;background:#000;"></div>
<div style="left:321px;top:224px;width:12px;height:1px;background:#000;"></div>
<div style="left:332px;top:214px;width:1px;height:11px;background:#000;"></div>
<div style="left:329px;top:211px;width:1px;height:4px;background:#000;"></div>
<div style="left:329px;top:214px;width:4px;height:1px;background:#000;"></div>
<div style="left:330px;top:212px;width:1px;height:1px;background:#000;"></div>
<div style="left:331px;top:213px;width:1px;height:1px;background:#000;"></div>
<span class="ft" style="left:336px;top:213px;">jcgm32.dll</span>
<div style="left:319px;top:228px;width:16px;height:12px;background:#000;"></div>
<div style="left:320px;top:229px;width:14px;height:1px;background:#40a0a0;"></div>
<div style="left:320px;top:231px;width:14px;height:8px;background:#fff;background-image:linear-gradient(45deg,#c0c0c0 25%,transparent 25%,transparent 75%,#c0c0c0 75%),linear-gradient(45deg,#c0c0c0 25%,transparent 25%,transparent 75%,#c0c0c0 75%);background-size:2px 2px;background-position:0 0,1px 1px"></div>
<span class="ft" style="left:336px;top:229px;">jimp16.exe</span>
<div style="left:321px;top:243px;width:9px;height:1px;background:#000;"></div>
<div style="left:321px;top:243px;width:1px;height:14px;background:#000;"></div>
<div style="left:321px;top:256px;width:12px;height:1px;background:#000;"></div>
<div style="left:332px;top:246px;width:1px;height:11px;background:#000;"></div>
<div style="left:329px;top:243px;width:1px;height:4px;background:#000;"></div>
<div style="left:329px;top:246px;width:4px;height:1px;background:#000;"></div>
<div style="left:330px;top:244px;width:1px;height:1px;background:#000;"></div>
<div style="left:331px;top:245px;width:1px;height:1px;background:#000;"></div>
<span class="ft" style="left:336px;top:245px;">jjpeg32.dll</span>
<div style="left:321px;top:259px;width:9px;height:1px;background:#000;"></div>
<div style="left:321px;top:259px;width:1px;height:14px;background:#000;"></div>
<div style="left:321px;top:272px;width:12px;height:1px;background:#000;"></div>
<div style="left:332px;top:262px;width:1px;height:11px;background:#000;"></div>
<div style="left:329px;top:259px;width:1px;height:4px;background:#000;"></div>
<div style="left:329px;top:262px;width:4px;height:1px;background:#000;"></div>
<div style="left:330px;top:260px;width:1px;height:1px;background:#000;"></div>
<div style="left:331px;top:261px;width:1px;height:1px;background:#000;"></div>
<span class="ft" style="left:336px;top:261px;">jlem3205.dll</span>
<div style="left:321px;top:275px;width:9px;height:1px;background:#000;"></div>
<div style="left:321px;top:275px;width:1px;height:14px;background:#000;"></div>
<div style="left:321px;top:288px;width:12px;height:1px;background:#000;"></div>
<div style="left:332px;top:278px;width:1px;height:11px;background:#000;"></div>
<div style="left:329px;top:275px;width:1px;height:4px;background:#000;"></div>
<div style="left:329px;top:278px;width:4px;height:1px;background:#000;"></div>
<div style="left:330px;top:276px;width:1px;height:1px;background:#000;"></div>
<div style="left:331px;top:277px;width:1px;height:1px;background:#000;"></div>
<span class="ft" style="left:336px;top:277px;">jpng32.dll</span>
<div style="left:321px;top:291px;width:9px;height:1px;background:#000;"></div>
<div style="left:321px;top:291px;width:1px;height:14px;background:#000;"></div>
<div style="left:321px;top:304px;width:12px;height:1px;background:#000;"></div>
<div style="left:332px;top:294px;width:1px;height:11px;background:#000;"></div>
<div style="left:329px;top:291px;width:1px;height:4px;background:#000;"></div>
<div style="left:329px;top:294px;width:4px;height:1px;background:#000;"></div>
<div style="left:330px;top:292px;width:1px;height:1px;background:#000;"></div>
<div style="left:331px;top:293px;width:1px;height:1px;background:#000;"></div>
<span class="ft" style="left:336px;top:293px;">jspin32.dll</span>
<div style="left:321px;top:307px;width:9px;height:1px;background:#000;"></div>
<div style="left:321px;top:307px;width:1px;height:14px;background:#000;"></div>
<div style="left:321px;top:320px;width:12px;height:1px;background:#000;"></div>
<div style="left:332px;top:310px;width:1px;height:11px;background:#000;"></div>
<div style="left:329px;top:307px;width:1px;height:4px;background:#000;"></div>
<div style="left:329px;top:310px;width:4px;height:1px;background:#000;"></div>
<div style="left:330px;top:308px;width:1px;height:1px;background:#000;"></div>
<div style="left:331px;top:309px;width:1px;height:1px;background:#000;"></div>
<span class="ft" style="left:336px;top:309px;">jtwn32.dll</span>
<div style="left:321px;top:323px;width:9px;height:1px;background:#000;"></div>
<div style="left:321px;top:323px;width:1px;height:14px;background:#000;"></div>
<div style="left:321px;top:336px;width:12px;height:1px;background:#000;"></div>
<div style="left:332px;top:326px;width:1px;height:11px;background:#000;"></div>
<div style="left:329px;top:323px;width:1px;height:4px;background:#000;"></div>
<div style="left:329px;top:326px;width:4px;height:1px;background:#000;"></div>
<div style="left:330px;top:324px;width:1px;height:1px;background:#000;"></div>
<div style="left:331px;top:325px;width:1px;height:1px;background:#000;"></div>
<span class="ft" style="left:336px;top:325px;">pcdlib32.dll</span>
<div style="left:321px;top:339px;width:9px;height:1px;background:#000;"></div>
<div style="left:321px;top:339px;width:1px;height:14px;background:#000;"></div>
<div style="left:321px;top:352px;width:12px;height:1px;background:#000;"></div>
<div style="left:332px;top:342px;width:1px;height:11px;background:#000;"></div>
<div style="left:329px;top:339px;width:1px;height:4px;background:#000;"></div>
<div style="left:329px;top:342px;width:4px;height:1px;background:#000;"></div>
<div style="left:330px;top:340px;width:1px;height:1px;background:#000;"></div>
<div style="left:331px;top:341px;width:1px;height:1px;background:#000;"></div>
<span class="ft" style="left:336px;top:341px;">pic32.flt</span>
<div style="left:316px;top:354px;width:86px;height:16px;background:#a6caf0;"></div>
<div style="left:316px;top:354px;width:84px;height:14px;border:1px dotted #000"></div>
<div style="left:319px;top:356px;width:16px;height:12px;background:#000;"></div>
<div style="left:320px;top:357px;width:14px;height:1px;background:#40a0a0;"></div>
<div style="left:320px;top:359px;width:14px;height:8px;background:#fff;background-image:linear-gradient(45deg,#c0c0c0 25%,transparent 25%,transparent 75%,#c0c0c0 75%),linear-gradient(45deg,#c0c0c0 25%,transparent 25%,transparent 75%,#c0c0c0 75%);background-size:2px 2px;background-position:0 0,1px 1px"></div>
<span class="ft" style="left:336px;top:357px;">psp.exe</span>
<div style="left:321px;top:371px;width:9px;height:1px;background:#000;"></div>
<div style="left:321px;top:371px;width:1px;height:14px;background:#000;"></div>
<div style="left:321px;top:384px;width:12px;height:1px;background:#000;"></div>
<div style="left:332px;top:374px;width:1px;height:11px;background:#000;"></div>
<div style="left:329px;top:371px;width:1px;height:4px;background:#000;"></div>
<div style="left:329px;top:374px;width:4px;height:1px;background:#000;"></div>
<div style="left:330px;top:372px;width:1px;height:1px;background:#000;"></div>
<div style="left:331px;top:373px;width:1px;height:1px;background:#000;"></div>
<div style="left:324px;top:375px;width:4px;height:1px;background:#000040;"></div>
<div style="left:324px;top:377px;width:6px;height:1px;background:#000040;"></div>
<div style="left:324px;top:379px;width:6px;height:1px;background:#000040;"></div>
<div style="left:324px;top:381px;width:6px;height:1px;background:#000040;"></div>
<span class="ft" style="left:336px;top:373px;">psp.hlp</span>
<div style="left:321px;top:387px;width:9px;height:1px;background:#000;"></div>
<div style="left:321px;top:387px;width:1px;height:14px;background:#000;"></div>
<div style="left:321px;top:400px;width:12px;height:1px;background:#000;"></div>
<div style="left:332px;top:390px;width:1px;height:11px;background:#000;"></div>
<div style="left:329px;top:387px;width:1px;height:4px;background:#000;"></div>
<div style="left:329px;top:390px;width:4px;height:1px;background:#000;"></div>
<div style="left:330px;top:388px;width:1px;height:1px;background:#000;"></div>
<div style="left:331px;top:389px;width:1px;height:1px;background:#000;"></div>
<div style="left:324px;top:391px;width:4px;height:1px;background:#000040;"></div>
<div style="left:324px;top:393px;width:6px;height:1px;background:#000040;"></div>
<div style="left:324px;top:395px;width:6px;height:1px;background:#000040;"></div>
<div style="left:324px;top:397px;width:6px;height:1px;background:#000040;"></div>
<span class="ft" style="left:336px;top:389px;">psp.ini</span>
<div style="left:319px;top:404px;width:16px;height:12px;background:#000;"></div>
<div style="left:320px;top:405px;width:14px;height:1px;background:#40a0a0;"></div>
<div style="left:320px;top:407px;width:14px;height:8px;background:#fff;background-image:linear-gradient(45deg,#c0c0c0 25%,transparent 25%,transparent 75%,#c0c0c0 75%),linear-gradient(45deg,#c0c0c0 25%,transparent 25%,transparent 75%,#c0c0c0 75%);background-size:2px 2px;background-position:0 0,1px 1px"></div>
<span class="ft" style="left:336px;top:405px;">pspbrwse.exe</span>
<div style="left:321px;top:419px;width:9px;height:1px;background:#000;"></div>
<div style="left:321px;top:419px;width:1px;height:14px;background:#000;"></div>
<div style="left:321px;top:432px;width:12px;height:1px;background:#000;"></div>
<div style="left:332px;top:422px;width:1px;height:11px;background:#000;"></div>
<div style="left:329px;top:419px;width:1px;height:4px;background:#000;"></div>
<div style="left:329px;top:422px;width:4px;height:1px;background:#000;"></div>
<div style="left:330px;top:420px;width:1px;height:1px;background:#000;"></div>
<div style="left:331px;top:421px;width:1px;height:1px;background:#000;"></div>
<div style="left:324px;top:423px;width:4px;height:1px;background:#000040;"></div>
<div style="left:324px;top:425px;width:6px;height:1px;background:#000040;"></div>
<div style="left:324px;top:427px;width:6px;height:1px;background:#000040;"></div>
<div style="left:324px;top:429px;width:6px;height:1px;background:#000040;"></div>
<span class="ft" style="left:336px;top:421px;">pspbrwse.hlp</span>
<div style="left:321px;top:435px;width:9px;height:1px;background:#000;"></div>
<div style="left:321px;top:435px;width:1px;height:14px;background:#000;"></div>
<div style="left:321px;top:448px;width:12px;height:1px;background:#000;"></div>
<div style="left:332px;top:438px;width:1px;height:11px;background:#000;"></div>
<div style="left:329px;top:435px;width:1px;height:4px;background:#000;"></div>
<div style="left:329px;top:438px;width:4px;height:1px;background:#000;"></div>
<div style="left:330px;top:436px;width:1px;height:1px;background:#000;"></div>
<div style="left:331px;top:437px;width:1px;height:1px;background:#000;"></div>
<div style="left:324px;top:439px;width:4px;height:1px;background:#000040;"></div>
<div style="left:324px;top:441px;width:6px;height:1px;background:#000040;"></div>
<div style="left:324px;top:443px;width:6px;height:1px;background:#000040;"></div>
<div style="left:324px;top:445px;width:6px;height:1px;background:#000040;"></div>
<span class="ft" style="left:336px;top:437px;">pspbrwse.ini</span>
<div style="left:407px;top:67px;width:9px;height:1px;background:#000;"></div>
<div style="left:407px;top:67px;width:1px;height:14px;background:#000;"></div>
<div style="left:407px;top:80px;width:12px;height:1px;background:#000;"></div>
<div style="left:418px;top:70px;width:1px;height:11px;background:#000;"></div>
<div style="left:415px;top:67px;width:1px;height:4px;background:#000;"></div>
<div style="left:415px;top:70px;width:4px;height:1px;background:#000;"></div>
<div style="left:416px;top:68px;width:1px;height:1px;background:#000;"></div>
<div style="left:417px;top:69px;width:1px;height:1px;background:#000;"></div>
<span class="ft" style="left:422px;top:69px;">pspud.flt</span>
<div style="left:407px;top:83px;width:9px;height:1px;background:#000;"></div>
<div style="left:407px;top:83px;width:1px;height:14px;background:#000;"></div>
<div style="left:407px;top:96px;width:12px;height:1px;background:#000;"></div>
<div style="left:418px;top:86px;width:1px;height:11px;background:#000;"></div>
<div style="left:415px;top:83px;width:1px;height:4px;background:#000;"></div>
<div style="left:415px;top:86px;width:4px;height:1px;background:#000;"></div>
<div style="left:416px;top:84px;width:1px;height:1px;background:#000;"></div>
<div style="left:417px;top:85px;width:1px;height:1px;background:#000;"></div>
<div style="left:410px;top:87px;width:4px;height:1px;background:#000040;"></div>
<div style="left:410px;top:89px;width:6px;height:1px;background:#000040;"></div>
<div style="left:410px;top:91px;width:6px;height:1px;background:#000040;"></div>
<div style="left:410px;top:93px;width:6px;height:1px;background:#000040;"></div>
<span class="ft" style="left:422px;top:85px;">readme.txt</span>
<div style="left:407px;top:99px;width:9px;height:1px;background:#000;"></div>
<div style="left:407px;top:99px;width:1px;height:14px;background:#000;"></div>
<div style="left:407px;top:112px;width:12px;height:1px;background:#000;"></div>
<div style="left:418px;top:102px;width:1px;height:11px;background:#000;"></div>
<div style="left:415px;top:99px;width:1px;height:4px;background:#000;"></div>
<div style="left:415px;top:102px;width:4px;height:1px;background:#000;"></div>
<div style="left:416px;top:100px;width:1px;height:1px;background:#000;"></div>
<div style="left:417px;top:101px;width:1px;height:1px;background:#000;"></div>
<span class="ft" style="left:422px;top:101px;">wpg32.flt</span>
<span class="ft" style="left:62px;top:85px;">acrobat</span>
<span class="ft" style="left:62px;top:101px;">cd-rom</span>
<span class="ft" style="left:62px;top:117px;">cleansys</span>
<span class="ft" style="left:62px;top:133px;">crystal</span>
<span class="ft" style="left:62px;top:149px;">encart95</span>
<span class="ft" style="left:62px;top:165px;">encart97</span>
<span class="ft" style="left:62px;top:181px;">excel4.0</span>
<span class="ft" style="left:62px;top:197px;">goldwave.303</span>
<span class="ft" style="left:62px;top:213px;">gp2edit</span>
<span class="ft" style="left:62px;top:229px;">jic</span>
<span class="ft" style="left:62px;top:245px;">mouse</span>
<span class="ft" style="left:62px;top:261px;">nu8.0</span>
<span class="ft" style="left:62px;top:277px;">office4.2</span>
<span class="ft" style="left:62px;top:293px;">psdwin</span>
<span class="ft" style="left:62px;top:309px;">psp</span>
<span class="ft" style="left:62px;top:325px;">psp1</span>
<span class="ft" style="left:62px;top:341px;">sdd60a</span>
<span class="ft" style="left:62px;top:357px;">thinkpad</span>
<span class="ft" style="left:62px;top:373px;">vb3</span>
<span class="ft" style="left:62px;top:389px;">voyetra</span>
<span class="ft" style="left:62px;top:405px;">winimage</span>
<span class="ft" style="left:62px;top:421px;">winplay3</span>
<span class="ft" style="left:62px;top:437px;">winzip</span>
<span class="ft" style="left:44px;top:69px;">progs</span></body></html>
